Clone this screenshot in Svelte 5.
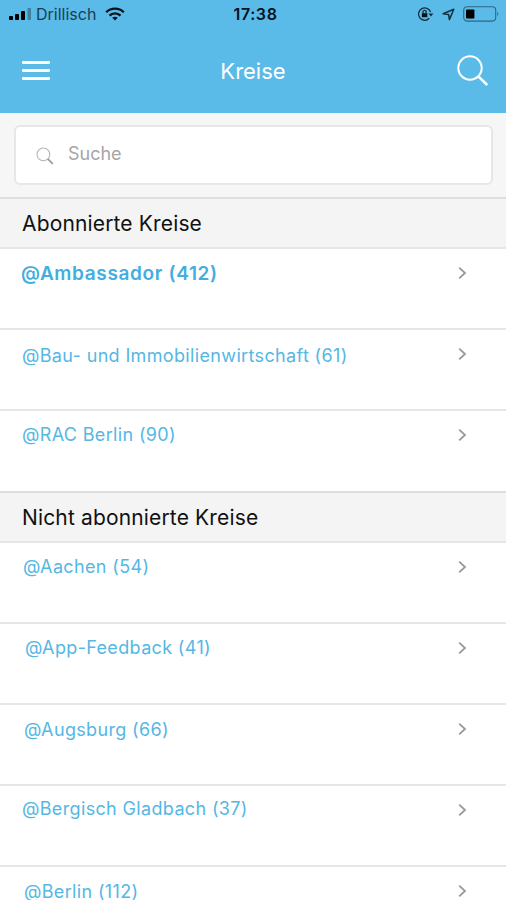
<script lang="ts">
  const sections = [
    {
      title: 'Abonnierte Kreise',
      groups: [
        { name: 'Ambassador', members: 412, unread: true, indent: 21, top: 13 },
        { name: 'Bau- und Immobilienwirtschaft', members: 61, indent: 22, top: 14 },
        { name: 'RAC Berlin', members: 90, indent: 22, top: 12 }
      ]
    },
    {
      title: 'Nicht abonnierte Kreise',
      groups: [
        { name: 'Aachen', members: 54, indent: 23, top: 12 },
        { name: 'App-Feedback', members: 41, indent: 25, top: 12 },
        { name: 'Augsburg', members: 66, indent: 24, top: 13 },
        { name: 'Bergisch Gladbach', members: 37, indent: 22, top: 11 },
        { name: 'Berlin', members: 112, indent: 24, top: 13 }
      ]
    }
  ];
</script>

<div class="screen">
  <header>
    <div class="status-bar">
      <div class="carrier">
        <svg width="23" height="12" viewBox="0 0 23 12">
          <rect x="0" y="8" width="4" height="4" rx="0.8" />
          <rect x="6" y="6" width="4" height="6" rx="0.8" />
          <rect x="12" y="3" width="4" height="9" rx="0.8" />
          <rect x="18.5" y="0" width="3.5" height="12" rx="0.8" opacity="0.3" />
        </svg>
        <span>Drillisch</span>
        <svg class="wifi" width="20" height="14" viewBox="0 0 20 14" fill="none" stroke="#06131a" stroke-width="2.3">
          <path d="M1.2 5.2C6 .3 14 .3 18.8 5.2" />
          <path d="M4.5 8.6C7.5 5.6 12.5 5.6 15.5 8.6" />
          <path d="M10 13.6L7.2 10.8Q10 8.6 12.8 10.8Z" fill="#06131a" stroke="none" />
        </svg>
      </div>
      <div class="clock">17:38</div>
      <div class="indicators">
        <svg width="17" height="14" viewBox="0 0 17 14" fill="none" stroke="#12313f" stroke-width="1.3">
          <path d="M13.6 5A6.2 6.2 0 1 0 12.3 11.3" />
          <path d="M11.4 6.4H16.4L14 9.6Z" fill="#12313f" stroke="none" />
          <rect x="4.9" y="6.2" width="5.4" height="4" fill="#06131a" stroke="none" />
          <path d="M6 6.4V5A1.6 1.6 0 0 1 9.2 5V6.4" />
        </svg>
        <svg width="13" height="13" viewBox="0 0 13 13" fill="none" stroke="#12313f" stroke-width="1.5" stroke-linejoin="round">
          <path d="M1.2 5.8L11.8 1.2L7.4 11.6L6.6 6.4Z" />
        </svg>
        <svg width="37" height="16" viewBox="0 0 37 16">
          <rect x="0.7" y="0.7" width="32" height="14.4" rx="3.5" fill="none" stroke="#2f6782" stroke-width="1.1" />
          <rect x="3" y="3.5" width="8.4" height="9" rx="0.8" />
          <path d="M34.3 5.8Q36.5 7.9 34.3 10Z" fill="#2f6782" />
        </svg>
      </div>
    </div>
    <div class="nav-bar">
      <button class="menu" aria-label="Menü">
        <span></span>
        <span></span>
        <span></span>
      </button>
      <h1>Kreise</h1>
      <button class="find" aria-label="Suchen">
        <svg width="32" height="32" viewBox="0 0 32 32" fill="none" stroke="#fff">
          <circle cx="13" cy="13" r="11.7" stroke-width="2" />
          <path d="M21.3 21.3L30.3 30" stroke-width="2.5" />
        </svg>
      </button>
    </div>
  </header>

  <div class="search-area">
    <label class="search-box">
      <svg width="18" height="18" viewBox="0 0 18 18" fill="none" stroke="#b5b5b5">
        <circle cx="7.4" cy="7.4" r="6.4" stroke-width="1.1" />
        <path d="M11.8 11.8L16.8 16.8" stroke="#999" stroke-width="1.7" />
      </svg>
      <span>Suche</span>
    </label>
  </div>

  {#each sections as section}
    <section>
      <h2>{section.title}</h2>
      {#each section.groups as group}
        <div
          class="row"
          class:unread={group.unread}
          style:padding-left="{group.indent}px"
          style:--top="{group.top}px"
        >
          <span class="name">@{group.name} ({group.members})</span>
          <svg class="chevron" width="9" height="14" viewBox="0 0 9 14" fill="none" stroke="#999" stroke-width="1.8">
            <path d="M1.2 1.6L7 7L1.2 12.4" />
          </svg>
        </div>
      {/each}
    </section>
  {/each}
</div>

<style>
  .screen {
    box-sizing: border-box;
    width: 506px;
    height: 900px;
    overflow: hidden;
    background: #fff;
    font-family: Inter, 'Liberation Sans', sans-serif;
  }

  header {
    height: 113px;
    background: #5abae8;
  }

  .status-bar {
    display: grid;
    grid-template-columns: 1fr auto 1fr;
    align-items: center;
    height: 28px;
    padding: 0 6px 0 9px;
    color: #06131a;
  }

  .status-bar svg {
    flex: none;
  }

  .carrier {
    display: flex;
    align-items: center;
    gap: 4px;
    font-size: 16px;
    color: #194052;
  }

  .wifi {
    margin-left: 5px;
  }

  .clock {
    font-size: 16px;
    font-weight: 600;
    letter-spacing: 0.6px;
    margin-left: 2px;
  }

  .indicators {
    display: flex;
    align-items: center;
    justify-content: flex-end;
    gap: 8px;
  }

  .nav-bar {
    display: grid;
    grid-template-columns: 1fr auto 1fr;
    align-items: center;
    height: 85px;
    padding: 0 17px 0 22px;
  }

  button {
    padding: 0;
    border: none;
    background: none;
    cursor: pointer;
  }

  .menu {
    display: flex;
    flex-direction: column;
    gap: 5px;
    width: 28px;
    margin-bottom: 1px;
  }

  .menu span {
    height: 3px;
    border-radius: 1px;
    background: #fff;
  }

  .find {
    display: flex;
    justify-self: end;
  }

  h1 {
    margin: 0 5px 0 0;
    font-size: 22px;
    font-weight: 400;
    color: #fff;
  }

  .search-area {
    height: 84px;
    box-sizing: border-box;
    padding: 12px 13px 12px 14px;
    background: #f6f6f6;
  }

  .search-box {
    display: flex;
    align-items: center;
    gap: 14px;
    box-sizing: border-box;
    height: 60px;
    padding-left: 20px;
    border: 2px solid #e7e7e7;
    border-radius: 6px;
    background: #fff;
    font-size: 18px;
    color: #a6a6a6;
  }

  .search-box svg {
    margin-top: 2px;
  }

  .search-box span {
    margin-bottom: 3px;
  }

  h2 {
    box-sizing: border-box;
    height: 52px;
    margin: 0;
    padding-left: 22px;
    border-top: 2px solid #dedede;
    border-bottom: 2px solid #e6e6e6;
    background: #f4f4f4;
    font-size: 21px;
    font-weight: 400;
    letter-spacing: 0.15px;
    line-height: 49px;
    color: #111;
  }

  .row {
    display: flex;
    justify-content: space-between;
    align-items: flex-start;
    box-sizing: border-box;
    height: 81px;
    padding-right: 39px;
    border-bottom: 2px solid #e6e6e6;
  }

  .row:last-child {
    height: 80px;
    border-bottom: none;
  }

  .name {
    margin-top: var(--top);
    font-size: 18px;
    line-height: 24px;
    letter-spacing: 0.35px;
    color: #55b7e4;
  }

  .unread .name {
    font-size: 19px;
    font-weight: 600;
    letter-spacing: 0.65px;
    color: #42aee0;
  }

  .chevron {
    margin-top: 17px;
  }
</style>
